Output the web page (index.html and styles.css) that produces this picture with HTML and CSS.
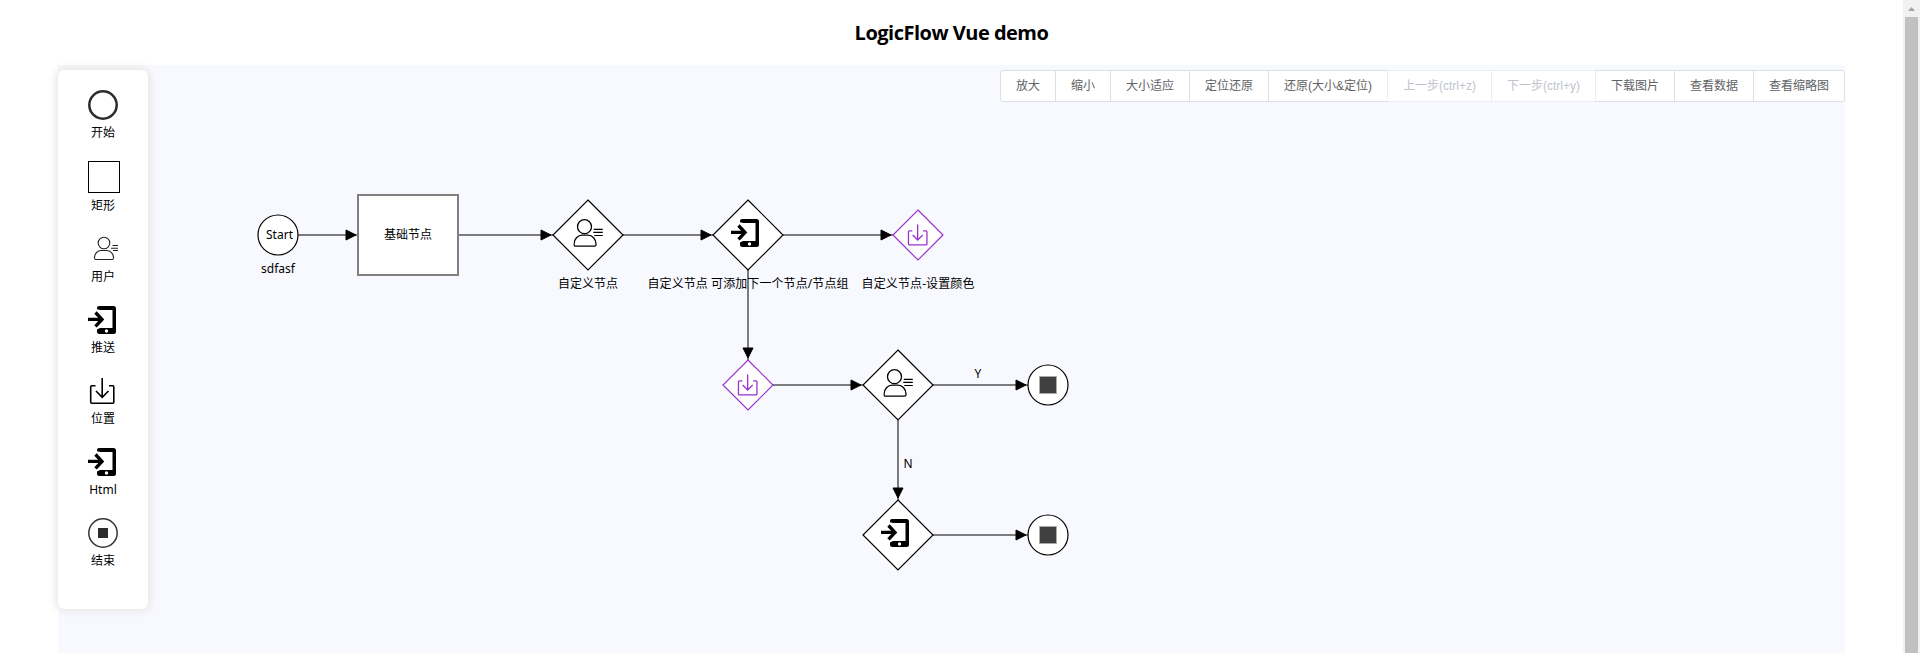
FILE: index.html
```html
<!DOCTYPE html>
<html lang="zh-CN">
<head>
<meta charset="utf-8">
<title>LogicFlow Vue demo</title>
<link rel="stylesheet" href="styles.css">
</head>
<body>
<svg class="defs" width="0" height="0">
  <symbol id="i-phone" viewBox="0 0 30 30">
    <path d="M11 1h14.500a2.500 2.500 0 0 1 2.500 2.500v23a2.500 2.500 0 0 1-2.500 2.500H11.500a2.500 2.500 0 0 1-2.500-2.500V24.500l3-1.500H24.500V5H12.500L9 4.200V3a2 2 0 0 1 2-2z"/>
    <path d="M0 14.400H13M7.500 7.500L14 14.400L7.500 21.300" fill="none" stroke="#000" stroke-width="3.300"/>
    <circle cx="18.500" cy="26" r="1.700" fill="#fff"/>
  </symbol>
  <symbol id="i-user" viewBox="0 0 30 30">
    <g fill="none" stroke="#222" stroke-width="1.100">
      <circle cx="16" cy="9" r="5.800"/>
      <path d="M7.800 25.500C6.800 25.500 6.500 25 6.500 24C6.500 19.500 9.500 16.500 13 16.500H18.500C22.500 16.500 25.500 19.500 25.500 24C25.500 25 25.200 25.500 24.200 25.500ZM24.500 11.500H30M23 14.300H30M25 16.500H30"/>
    </g>
  </symbol>
  <symbol id="i-member" viewBox="0 0 30 28">
    <g fill="none" stroke="#000" stroke-width="1.300">
      <circle cx="11.200" cy="7.700" r="7"/>
      <path d="M2.500 27.200C1 27.200 .7 26.600 .7 25.400C.7 20 4.500 16.200 9 16.200H14.500C19 16.200 22.800 20 22.800 25.400C22.800 26.600 22.500 27.200 21 27.200Z"/>
      <path d="M20.500 10.400H29.500M20 13.400H29.500M21 16.500H29.500" stroke-width="1.200"/>
    </g>
  </symbol>
  <symbol id="i-down" viewBox="0 0 30 30">
    <path d="M7.500 9.800H3.800Q2.700 9.800 2.700 10.900V26.100Q2.700 27.300 3.800 27.300H24.700Q25.800 27.300 25.800 26.100V10.900Q25.800 9.800 24.700 9.800H21M14.200 2V21.500M8 15L14.200 21.300L20.500 15" fill="none" stroke="currentColor" stroke-width="1.600"/>
  </symbol>
</svg>
<div class="app">
  <main class="page">
    <h1 class="title">LogicFlow Vue demo</h1>
    <section class="canvas">
      <svg class="graph" viewBox="58 65 1787 588">
        <defs>
          <marker id="arrow" viewBox="-13 -6 13 12" markerWidth="13" markerHeight="12" refX="0" refY="0" orient="auto" markerUnits="userSpaceOnUse">
            <path d="M-2 0L-12 -5V5Z" stroke="#000"/>
          </marker>
        </defs>
        <g class="edges">
          <path d="M298 235H358"/><path d="M458 235H553"/><path d="M623 235H713"/><path d="M783 235H893"/>
          <path d="M748 270V360"/><path d="M773 385H863"/><path d="M933 385H1028"/><path d="M898 420V500"/><path d="M933 535H1028"/>
        </g>
        <g class="nodes">
          <circle cx="278" cy="235" r="20"/>
          <rect class="box" x="358" y="195" width="100" height="80"/>
          <path d="M588 200L623 235L588 270L553 235Z"/>
          <path d="M748 200L783 235L748 270L713 235Z"/>
          <path class="purple" d="M918 210L943 235L918 260L893 235Z"/>
          <path class="purple" d="M748 360L773 385L748 410L723 385Z"/>
          <path d="M898 350L933 385L898 420L863 385Z"/>
          <path d="M898 500L933 535L898 570L863 535Z"/>
          <circle cx="1048" cy="385" r="20"/>
          <circle cx="1048" cy="535" r="20"/>
        </g>
        <use href="#i-member" x="573.300" y="219" width="30" height="28"/>
        <use href="#i-member" x="883.300" y="369" width="30" height="28"/>
        <use href="#i-phone" x="731" y="218" width="30" height="30"/>
        <use href="#i-phone" x="881" y="518" width="30" height="30"/>
        <use class="violet" href="#i-down" x="906.300" y="223" width="24" height="24"/>
        <use class="violet" href="#i-down" x="736.300" y="373" width="24" height="24"/>
        <g class="stops">
          <rect x="1039.500" y="376.500" width="17" height="17"/>
          <rect x="1039.500" y="526.500" width="17" height="17"/>
        </g>
        <g class="labels">
          <text x="279.500" y="239" textLength="27">Start</text>
          <text x="278" y="273" textLength="34">sdfasf</text>
          <text x="408" y="238.500">基础节点</text>
          <text x="588" y="288">自定义节点</text>
          <text x="748" y="288" textLength="201">自定义节点 可添加下一个节点/节点组</text>
          <text x="918" y="288" textLength="113">自定义节点-设置颜色</text>
          <text x="978" y="378">Y</text>
          <text x="908" y="468">N</text>
        </g>
      </svg>
      <div class="toolbar">
        <button class="btn w2">放大</button><button class="btn w2">缩小</button><button class="btn w4">大小适应</button><button class="btn w4">定位还原</button><button class="btn w8">还原(大小&amp;定位)</button><button class="btn step" disabled>上一步(ctrl+z)</button><button class="btn step" disabled>下一步(ctrl+y)</button><button class="btn w4">下载图片</button><button class="btn w4">查看数据</button><button class="btn w5">查看缩略图</button>
      </div>
      <aside class="panel">
        <div class="item"><svg class="icon" viewBox="0 0 30 30"><circle cx="15" cy="15" r="13.700" fill="none" stroke="#2c2c2c" stroke-width="2.500"/></svg><span>开始</span></div>
        <div class="item"><i class="square"></i><span>矩形</span></div>
        <div class="item"><svg class="icon"><use href="#i-user"/></svg><span>用户</span></div>
        <div class="item"><svg class="icon"><use href="#i-phone"/></svg><span>推送</span></div>
        <div class="item"><svg class="icon"><use href="#i-down"/></svg><span>位置</span></div>
        <div class="item"><svg class="icon"><use href="#i-phone"/></svg><span>Html</span></div>
        <div class="item"><svg class="icon" viewBox="0 0 30 30"><circle cx="15" cy="15" r="14.200" fill="none" stroke="#333" stroke-width="1.500"/><path d="M10 10h10v10H10z" fill="#2c2c2c"/></svg><span>结束</span></div>
      </aside>
    </section>
  </main>
  <div class="scrollbar"><svg class="up" viewBox="0 0 17 17"><path d="M5 11L8.500 7L12 11Z"/></svg><div class="thumb"></div></div>
</div>
</body>
</html>
```
FILE: styles.css
```css
body { margin: 0; overflow: hidden; background: #fff; color: #000; font-family: "Noto Sans", "Noto Sans CJK SC", sans-serif; }
.defs { position: absolute; }
.app { display: flex; height: 653px; }
.page { flex: 1; display: flex; flex-direction: column; padding: 0 58px; }
.title { margin: 0; height: 65px; line-height: 66px; text-align: center; font-family: "Open Sans", sans-serif; font-size: 20px; font-weight: 700; letter-spacing: -0.5px; }
.canvas { position: relative; flex: 1; background: #f8f9ff; }
.graph { position: absolute; left: 0; top: 0; width: 1787px; height: 588px; }
.edges path { fill: none; stroke: #000; marker-end: url(#arrow); }
.nodes > * { fill: #fff; stroke: #000; stroke-width: 1.2; }
.nodes .box { stroke: #808080; stroke-width: 2; }
.nodes .purple { stroke: #9932cc; }
.violet { color: #9932cc; }
.stops rect { fill: #404040; stroke: #aaa; }
.labels { font-size: 12px; text-anchor: middle; }
.toolbar { position: relative; display: flex; justify-content: flex-end; padding-top: 5px; }
.btn { box-sizing: border-box; height: 32px; margin: 0 0 0 -1px; padding: 0; border: 1px solid #dcdfe6; background: #fff; color: #606266; font: 12px/28px "Liberation Sans", "Noto Sans CJK SC", sans-serif; white-space: nowrap; position: relative; }
.btn:first-child { border-radius: 3px 0 0 3px; }
.btn:last-child { border-radius: 0 3px 3px 0; }
.btn:disabled { color: #c0c4cc; border-color: #ebeef5; }
.btn:disabled + .btn:not(:disabled) { border-left-color: #ebeef5; }
.w2 { width: 56px; }
.w4 { width: 80px; }
.w5 { width: 92px; }
.w8 { width: 120px; }
.step { width: 105px; }
.panel { position: absolute; left: 0; top: 5px; box-sizing: border-box; width: 90px; height: 539px; padding-top: 20px; background: #fff; border-radius: 6px; box-shadow: 0 0 10px 1px rgb(228, 224, 219); }
.item { margin: 0 30px 20px; display: flex; flex-direction: column; font-size: 12px; line-height: 16px; }
.item span { width: 30px; margin-top: 5px; text-align: center; white-space: nowrap; }
.icon { display: block; width: 30px; height: 30px; }
.square { box-sizing: border-box; width: 32px; height: 32px; border: 1px solid #000; }
.scrollbar { width: 17px; background: #f1f1f1; display: flex; flex-direction: column; }
.up { width: 17px; height: 17px; fill: #a3a3a3; }
.thumb { flex: 1; margin: 0 2px; background: #c1c1c1; }
```
